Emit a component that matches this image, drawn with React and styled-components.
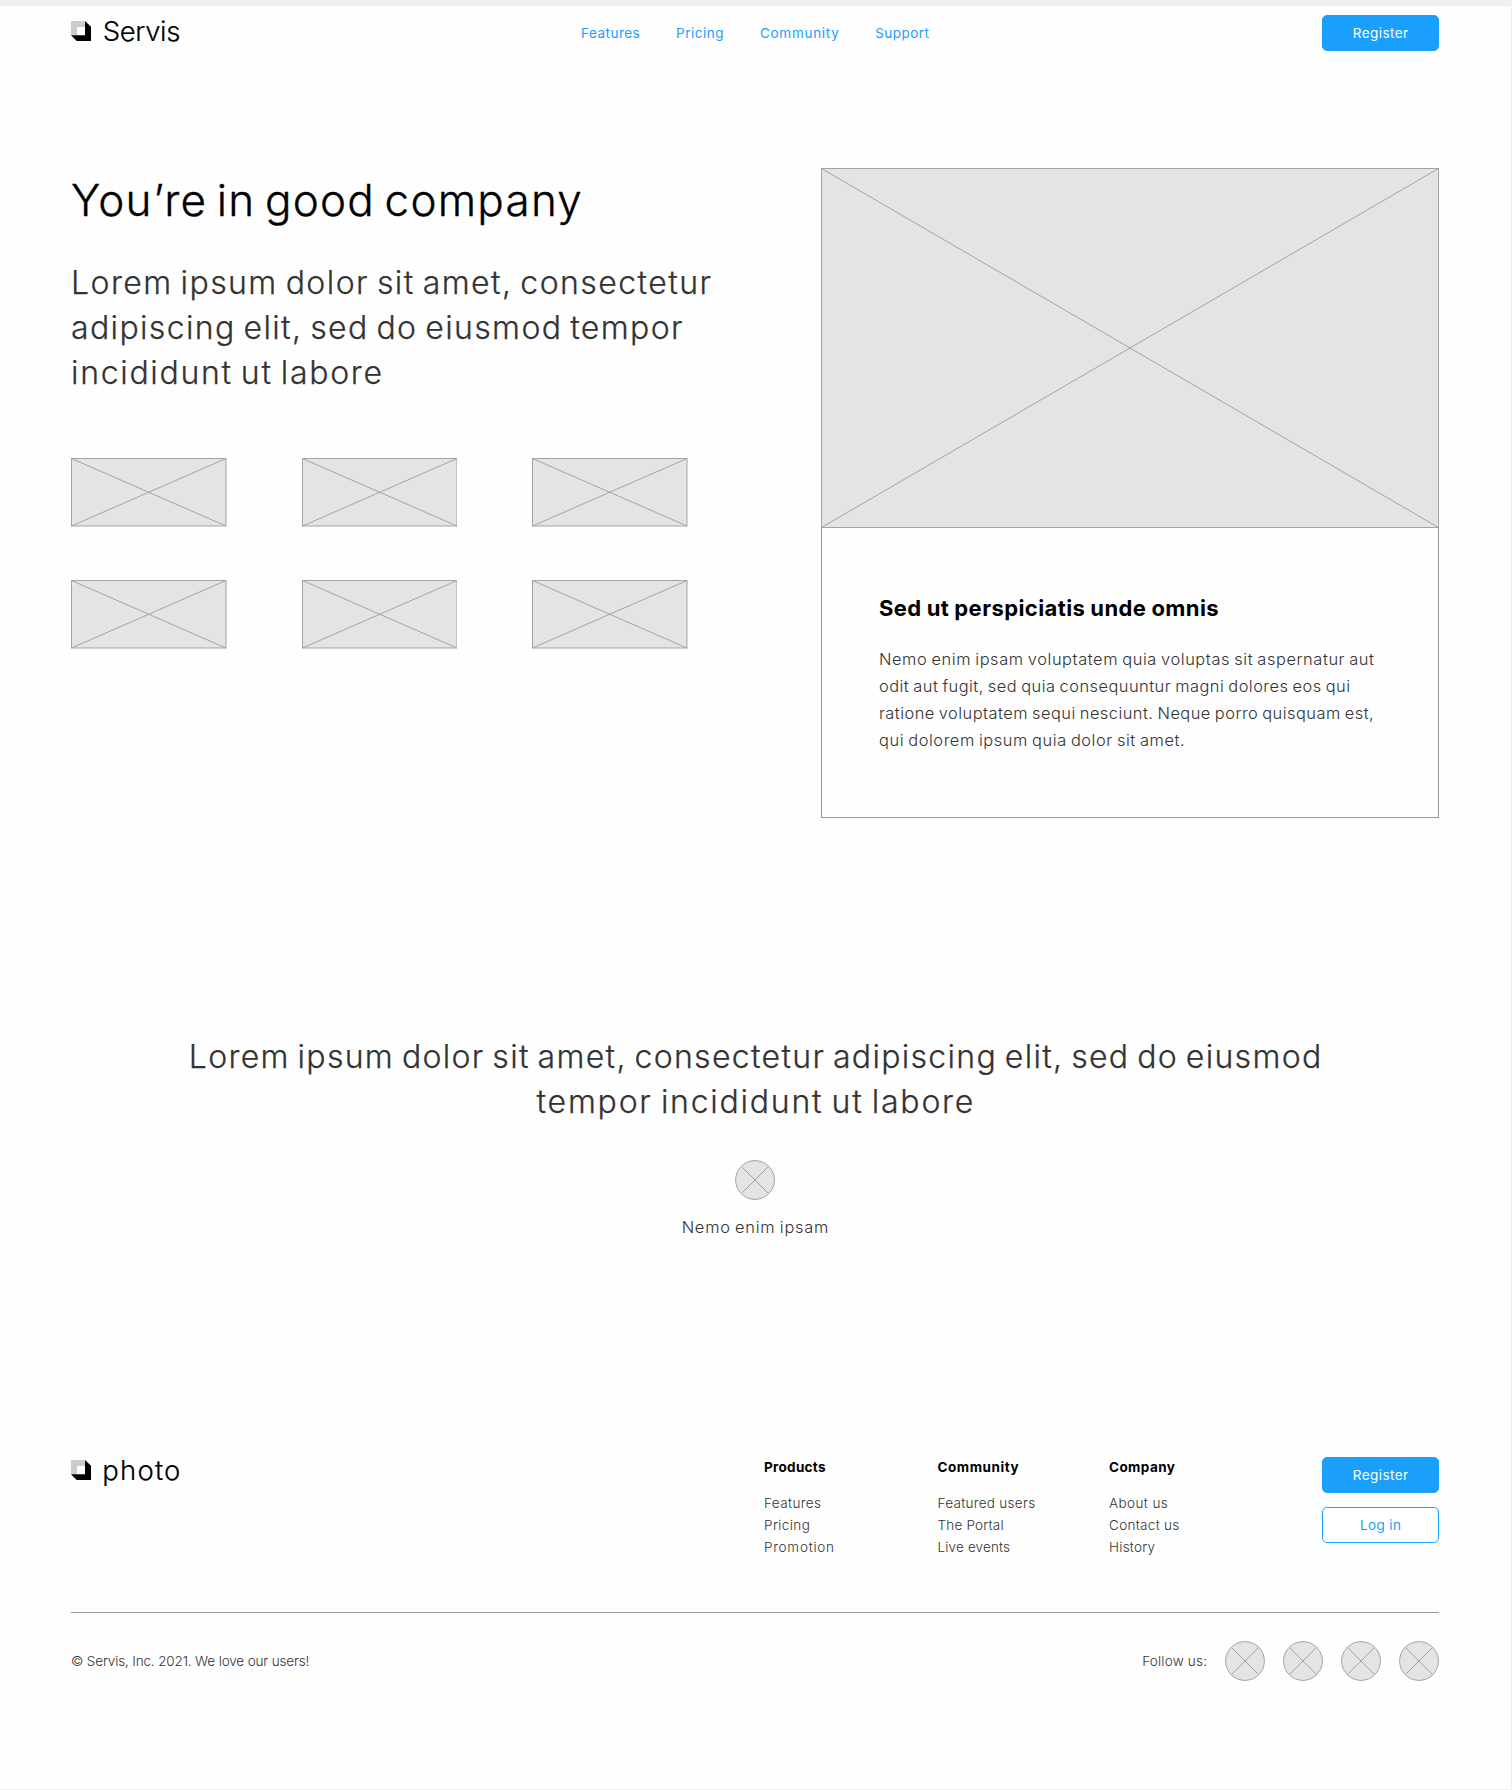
import React from "react";
import styled, { createGlobalStyle } from "styled-components";

const GlobalStyle = createGlobalStyle`
  *, *::before, *::after { box-sizing: border-box; }
  body {
    margin: 0;
    background: #fefefe;
    color: #333;
    font-family: Inter, "Liberation Sans", sans-serif;
    font-weight: 300;
  }
`;

const Page = styled.div`
  width: 1512px;
  height: 1790px;
  padding: 0 72px 0 71px;
  border: solid #f0f0f0;
  border-width: 6px 1px 1px 0;
  overflow: hidden;
`;

const Line = styled.span`
  display: block;
  white-space: nowrap;
  letter-spacing: ${(p) => p.$track}px;
  margin-right: ${(p) => -p.$track}px;
`;

const Header = styled.header`
  display: grid;
  grid-template-columns: 1fr auto 1fr;
  align-items: center;
  padding: 9px 0;
`;

const Brand = styled.div`
  display: flex;
  align-items: center;
  gap: ${(p) => p.$gap}px;
  height: 26px;
  margin-bottom: ${(p) => p.$lift || 0}px;
  color: #000;
  font-size: 27.5px;
  line-height: 26px;
  -webkit-text-stroke: 0.2px;
`;

const Nav = styled.nav`
  display: flex;
  gap: 36.3px;
`;

const NavLink = styled.a`
  color: #1a9ffc;
  font-size: 13.5px;
  font-weight: 400;
  line-height: 20px;
`;

const Button = styled.button`
  display: flex;
  align-items: center;
  justify-content: center;
  justify-self: end;
  width: 117px;
  height: 36px;
  padding: 0;
  border: 1px solid #1a9ffc;
  border-radius: 5px;
  background: ${(p) => (p.$outline ? "#fff" : "#1a9ffc")};
  color: ${(p) => (p.$outline ? "#1a9ffc" : "#fff")};
  font: 400 13.5px/20px Inter, "Liberation Sans", sans-serif;
`;

const Hero = styled.section`
  display: grid;
  grid-template-columns: 1fr 618px;
  padding-top: 108px;
`;

const Title = styled.h1`
  margin: 2px 0 0;
  color: #000;
  font-size: 44px;
  font-weight: 300;
  line-height: 60px;
  word-spacing: -4px;
  -webkit-text-stroke: 0.35px;
`;

const Lead = styled.p`
  margin: 30px 0 0;
  font-size: 32px;
  line-height: 45px;
  word-spacing: -2.5px;
  -webkit-text-stroke: 0.25px;
`;

const ClientGrid = styled.div`
  display: grid;
  grid-template-columns: repeat(3, 155.5px);
  grid-auto-rows: 68.5px;
  gap: 53.5px 75.2px;
  margin-top: 63px;
`;

const Frame = styled.svg`
  display: block;
  width: 100%;
  height: ${(p) => p.$height}px;
`;

const Card = styled.article`
  height: 650px;
`;

const CardBody = styled.div`
  height: 290px;
  padding: 65px 58px 0 57px;
  border: solid #999;
  border-width: 0 1px 1px;
`;

const CardTitle = styled.h2`
  margin: 0;
  color: #000;
  font-size: 22px;
  font-weight: 700;
  line-height: 30px;
  word-spacing: -0.5px;
`;

const CardText = styled.p`
  margin: 22.5px 0 0;
  font-size: 16.4px;
  line-height: 27px;
  word-spacing: -1px;
`;

const Quote = styled.section`
  display: flex;
  flex-direction: column;
  align-items: center;
  margin-top: 215.5px;
`;

const QuoteText = styled.p`
  display: flex;
  flex-direction: column;
  align-items: center;
  margin: 0 0 36px;
  font-size: 32px;
  line-height: 45px;
  word-spacing: -2.5px;
  -webkit-text-stroke: 0.25px;
`;

const Caption = styled.p`
  margin: 14.5px 0 0;
  font-size: 16.4px;
  line-height: 27px;
  word-spacing: -1px;
`;

const Circle = styled.svg`
  display: block;
  flex: none;
  width: 40px;
  height: 40px;
`;

const Footer = styled.footer`
  margin-top: 216px;
`;

const FooterTop = styled.div`
  display: grid;
  grid-template-columns: 693px 173.5px 171.5px 1fr 117px;
  align-items: start;
  height: 155px;
`;

const ColumnTitle = styled.h3`
  margin: 0 0 15px;
  color: #000;
  font-size: 13.5px;
  font-weight: 700;
  line-height: 21px;
`;

const ColumnLinks = styled.div`
  font-size: 13.5px;
  line-height: 21.8px;
`;

const Actions = styled.div`
  display: grid;
  gap: 14px;
`;

const FooterBottom = styled.div`
  display: flex;
  align-items: center;
  justify-content: space-between;
  padding-top: 28px;
  border-top: 1px solid #999;
  font-size: 13.5px;
  line-height: 20px;
`;

const Social = styled.div`
  display: flex;
  align-items: center;
  gap: 18px;
`;

const Mark = () => (
  <svg width="20.3" height="20.3" viewBox="0 0 20.3 20.3" aria-hidden="true">
    <path d="M0 0H14V6H6V14.3H0Z" fill="#ccc" />
    <path d="M6 6H14V14.3H6Z" fill="#fff" />
    <path d="M14 0L20.3 6V20.3H6L0 14.3H14Z" fill="#000" />
  </svg>
);

const Placeholder = ({ width, height }) => (
  <Frame $height={height} viewBox={`0 0 ${width} ${height}`} stroke="#a3a3a3">
    <rect x=".5" y=".5" width={width - 1} height={height - 1} fill="#e4e4e4" />
    <path d={`M.5 .5L${width - 0.5} ${height - 0.5}M${width - 0.5} .5L.5 ${height - 0.5}`} />
  </Frame>
);

const RoundPlaceholder = () => (
  <Circle viewBox="0 0 40 40" stroke="#a3a3a3">
    <circle cx="20" cy="20" r="19.4" fill="#e4e4e4" />
    <path d="M6.3 6.3L33.7 33.7M33.7 6.3L6.3 33.7" />
  </Circle>
);

const Lines = ({ items }) =>
  items.map(([text, track]) => (
    <Line key={text} $track={track}>{text}</Line>
  ));

const nav = [["Features", 0.48], ["Pricing", 0.52], ["Community", 0.73], ["Support", 0.45]];

const columns = [
  { title: ["Products", 0.3], links: [["Features", 0.4], ["Pricing", 0.4], ["Promotion", 0.75]] },
  { title: ["Community", 0.55], links: [["Featured users", 0.3], ["The Portal", 0.2], ["Live events", 0.15]] },
  { title: ["Company", 0.427], links: [["About us", 0.4], ["Contact us", 0.3], ["History", 0.25]] },
];

export default function App() {
  return (
    <>
      <GlobalStyle />
      <Page>
        <Header>
          <Brand $gap={11.5} $lift={4}>
            <Mark />
            <Line $track={-0.4}>Servis</Line>
          </Brand>
          <Nav>
            {nav.map(([text, track]) => (
              <NavLink key={text}><Line $track={track}>{text}</Line></NavLink>
            ))}
          </Nav>
          <Button><Line $track={0.44}>Register</Line></Button>
        </Header>

        <Hero>
          <div>
            <Title><Line $track={1.22}>You’re in good company</Line></Title>
            <Lead>
              <Lines items={[
                ["Lorem ipsum dolor sit amet, consectetur", 1.43],
                ["adipiscing elit, sed do eiusmod tempor", 1.36],
                ["incididunt ut labore", 1.68],
              ]} />
            </Lead>
            <ClientGrid>
              {[1, 2, 3, 4, 5, 6].map((n) => <Placeholder key={n} width={155.5} height={68.5} />)}
            </ClientGrid>
          </div>
          <Card>
            <Placeholder width={618} height={360} />
            <CardBody>
              <CardTitle><Line $track={0.4}>Sed ut perspiciatis unde omnis</Line></CardTitle>
              <CardText>
                <Lines items={[
                  ["Nemo enim ipsam voluptatem quia voluptas sit aspernatur aut", 0.58],
                  ["odit aut fugit, sed quia consequuntur magni dolores eos qui", 0.48],
                  ["ratione voluptatem sequi nesciunt. Neque porro quisquam est,", 0.47],
                  ["qui dolorem ipsum quia dolor sit amet.", 0.57],
                ]} />
              </CardText>
            </CardBody>
          </Card>
        </Hero>

        <Quote>
          <QuoteText>
            <Lines items={[
              ["Lorem ipsum dolor sit amet, consectetur adipiscing elit, sed do eiusmod", 1.3],
              ["tempor incididunt ut labore", 1.76],
            ]} />
          </QuoteText>
          <RoundPlaceholder />
          <Caption><Line $track={0.77}>Nemo enim ipsam</Line></Caption>
        </Quote>

        <Footer>
          <FooterTop>
            <Brand $gap={11}>
              <Mark />
              <Line $track={1.2}>photo</Line>
            </Brand>
            {columns.map(({ title, links }) => (
              <div key={title[0]}>
                <ColumnTitle><Lines items={[title]} /></ColumnTitle>
                <ColumnLinks><Lines items={links} /></ColumnLinks>
              </div>
            ))}
            <Actions>
              <Button><Line $track={0.44}>Register</Line></Button>
              <Button $outline><Line $track={0.37}>Log in</Line></Button>
            </Actions>
          </FooterTop>
          <FooterBottom>
            <Line $track={-0.15}>© Servis, Inc. 2021. We love our users!</Line>
            <Social>
              <Line $track={0.2}>Follow us:</Line>
              {[1, 2, 3, 4].map((n) => <RoundPlaceholder key={n} />)}
            </Social>
          </FooterBottom>
        </Footer>
      </Page>
    </>
  );
}
